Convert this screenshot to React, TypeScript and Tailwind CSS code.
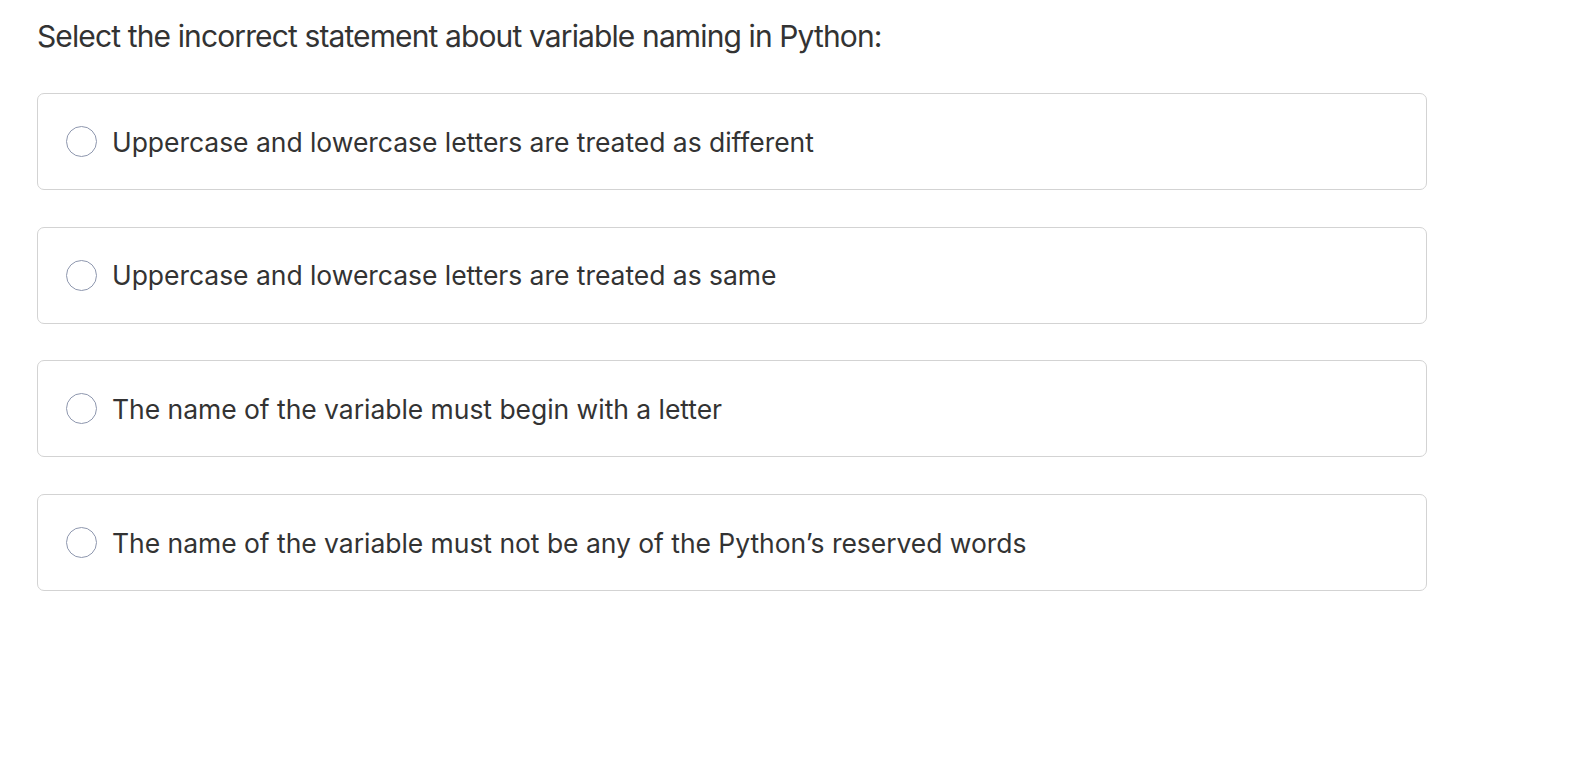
import React from "react";

const options = [
  "Uppercase and lowercase letters are treated as different",
  "Uppercase and lowercase letters are treated as same",
  "The name of the variable must begin with a letter",
  "The name of the variable must not be any of the Python\u2019s reserved words",
];

export default function App() {
  return (
    <div
      className="min-h-[764px] w-full bg-white pl-[37px] pt-[21px] text-[#333333]"
      style={{ fontFamily: "Inter, 'Noto Sans', sans-serif" }}
    >
      <h1 className="m-0 text-[30px] font-normal leading-[30px] tracking-[-0.88px]">
        Select the incorrect statement about variable naming in Python:
      </h1>
      <div className="mt-[42px] flex w-[1390px] flex-col gap-[36.7px]">
        {options.map((o) => (
          <label
            key={o}
            className="flex h-[97px] cursor-pointer items-center rounded-[7px] border border-[#d3d3d3] bg-white pl-[28px]"
          >
            <span className="h-[31px] w-[31px] shrink-0 rounded-full border border-[#8e97ae] bg-white" />
            <span className="ml-[15px] text-[26.5px] leading-[30px] tracking-[-0.04px]">{o}</span>
          </label>
        ))}
      </div>
    </div>
  );
}
